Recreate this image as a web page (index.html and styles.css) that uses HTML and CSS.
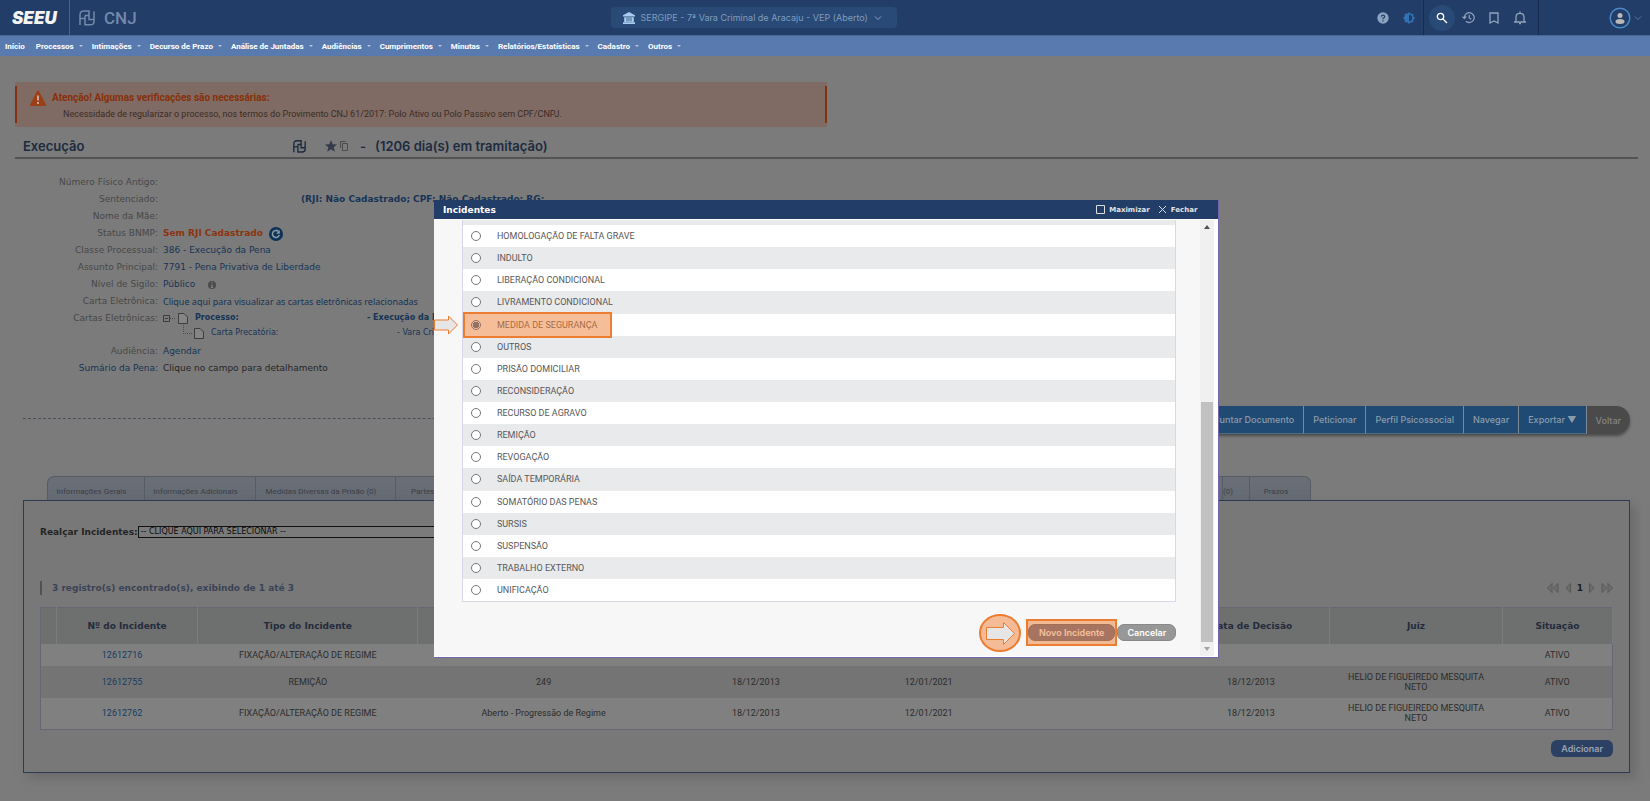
FILE: index.html
```html
<!DOCTYPE html>
<html lang="pt-BR">
<head>
<meta charset="utf-8">
<title>SEEU - Execução</title>
<link rel="stylesheet" href="styles.css">
</head>
<body>
<header class="topbar">
  <a class="brand" href="#">SEEU</a>
  <svg class="pj" viewBox="0 0 16 16" width="16" height="16"><path d="M1 15V5Q1 1 5 1H10V5.500M1 8.500H6M6 5.500V14.800H11.500Q15 14.800 15 11.500V1.500M6 5.500H10V9.500H15"/></svg>
  <span class="cnj">CNJ</span>
  <button class="court" type="button">
    <svg viewBox="0 0 12 12" width="12" height="12"><path fill="#a9cdf0" d="M6 0 12 3.200V4.500H0V3.200ZM1.200 5.200H10.800V10H1.200ZM0 10.300H12V12H0Z"/><path stroke="#294a76" stroke-width=".8" d="M4 5.500V9.500M6 5.500V9.500M8 5.500V9.500"/></svg>
    <span>SERGIPE - 7ª Vara Criminal de Aracaju - VEP (Aberto)</span>
    <svg viewBox="0 0 8 8" width="8" height="8"><path fill="none" stroke="#8aa6c6" d="M1 2.500 4 5.500 7 2.500"/></svg>
  </button>
  <div class="tools">
    <button class="tool" type="button" aria-label="Ajuda"><svg viewBox="0 0 12 12" width="12" height="12"><circle cx="6" cy="6" r="5.700" fill="#8ca3c2"/><path fill="none" stroke="#223d68" stroke-width="1.200" d="M4.300 4.700Q4.400 3.200 6 3.200T7.700 4.700Q7.600 5.600 6 6.300V7.300M6 8.200V9.400"/></svg></button>
    <button class="tool" type="button" aria-label="Contraste"><svg viewBox="0 0 12 12" width="12" height="12"><path fill="#3272b4" d="M6 0 7.700 1.700H10.300V4.300L12 6 10.300 7.700V10.300H7.700L6 12 4.300 10.300H1.700V7.700L0 6 1.700 4.300V1.700H4.300Z"/><path fill="#223d68" d="M6 2.800A3.200 3.200 0 0 1 6 9.200Z"/></svg></button>
  </div>
  <div class="tools tools-main">
    <button class="tool tool-on" type="button" aria-label="Pesquisar"><svg viewBox="0 0 12 12" width="12" height="12" fill="none" stroke="#fff" stroke-width="1.300"><circle cx="4.500" cy="4.500" r="3.200"/><path d="M7 7 11 11"/></svg></button>
    <button class="tool" type="button" aria-label="Histórico"><svg viewBox="0 0 14 14" width="13" height="13" fill="none" stroke="#93a3bb" stroke-width="1.300"><path d="M2.500 7A5.300 5.300 0 1 1 4.200 11M.5 6 2.500 8 4.700 6M7.800 4V7.500L10 9"/></svg></button>
    <button class="tool" type="button" aria-label="Favoritos"><svg viewBox="0 0 12 12" width="12" height="12" fill="none" stroke="#93a3bb" stroke-width="1.300"><path d="M2 1H10V11L6 9 2 11Z"/></svg></button>
    <button class="tool" type="button" aria-label="Notificações"><svg viewBox="0 0 12 14" width="12" height="14" fill="none" stroke="#93a3bb" stroke-width="1.300"><path d="M0 11H12M2 11V6Q2 2.300 6 2.300T10 6V11M6 .5V2M5 12.700H7"/></svg></button>
  </div>
  <button class="user" type="button" aria-label="Usuário">
    <svg viewBox="0 0 22 22" width="22" height="22"><circle cx="11" cy="11" r="9.800" fill="none" stroke="#4d88c6" stroke-width="1.500"/><circle cx="11" cy="8.500" r="2.500" fill="#b9b9b9"/><ellipse cx="11" cy="14.500" rx="4.500" ry="2.500" fill="#b9b9b9"/></svg>
    <svg viewBox="0 0 8 8" width="8" height="8"><path fill="none" stroke="#4f79a3" d="M1 2.500 4 5.500 7 2.500"/></svg>
  </button>
</header>
<nav class="menu">
  <a href="#">Início</a><a class="drop" href="#">Processos</a><a class="drop" href="#">Intimações</a><a class="drop" href="#">Decurso de Prazo</a><a class="drop" href="#">Análise de Juntadas</a><a class="drop" href="#">Audiências</a><a class="drop" href="#">Cumprimentos</a><a class="drop" href="#">Minutas</a><a class="drop" href="#">Relatórios/Estatísticas</a><a class="drop" href="#">Cadastro</a><a class="drop" href="#">Outros</a>
</nav>
<main class="page">
  <section class="alert">
    <svg viewBox="0 0 16 16" width="16" height="16"><path fill="#9c3f16" stroke="#9c3f16" stroke-linejoin="round" stroke-width="2" d="M8 1.500 15 15H1Z"/><path stroke="#c9b0a6" stroke-width="1.800" d="M8 5.500V10.500M8 12V14"/></svg>
    <div><strong>Atenção! Algumas verificações são necessárias:</strong>
    <p>Necessidade de regularizar o processo, nos termos do Provimento CNJ 61/2017: Polo Ativo ou Polo Passivo sem CPF/CNPJ.</p></div>
  </section>
  <div class="heading">
    <h1>Execução</h1>
    <svg class="h-pj" viewBox="0 0 16 16" width="13" height="13"><path d="M1 15V5Q1 1 5 1H10V5.500M1 8.500H6M6 5.500V14.800H11.500Q15 14.800 15 11.500V1.500M6 5.500H10V9.500H15"/></svg>
    <svg class="h-star" viewBox="0 0 12 12" width="12" height="12"><path fill="#343c4b" d="M6 0 7.700 4.200 12 4.500 8.700 7.300 9.800 11.800 6 9.300 2.200 11.800 3.300 7.300 0 4.500 4.300 4.200Z"/></svg>
    <svg class="h-copy" viewBox="0 0 8 10" width="8" height="10"><path fill="none" stroke="#4b4b4b" d="M.5 7V.5H5.500M2.500 2.500H7.500V9.500H2.500Z"/></svg>
    <span class="dash">-</span>
    <span>(1206 dia(s) em tramitação)</span>
  </div>
  <dl class="facts">
    <dt>Número Físico Antigo:</dt><dd></dd>
    <dt>Sentenciado:</dt><dd><b class="rji">(RJI: Não Cadastrado; CPF: Não Cadastrado; RG:</b></dd>
    <dt>Nome da Mãe:</dt><dd></dd>
    <dt>Status BNMP:</dt><dd class="status"><b>Sem RJI Cadastrado</b><svg viewBox="0 0 14 14" width="14" height="14"><circle cx="7" cy="7" r="7" fill="#0c3357"/><path fill="none" stroke="#8b97a3" stroke-width="1.600" d="M9.500 4.500A3.500 3.500 0 1 0 10.300 8"/><path fill="#8b97a3" d="M10.800 3V6.800H7Z"/></svg></dd>
    <dt>Classe Processual:</dt><dd>386 - Execução da Pena</dd>
    <dt>Assunto Principal:</dt><dd>7791 - Pena Privativa de Liberdade</dd>
    <dt>Nível de Sigilo:</dt><dd class="level">Público<svg viewBox="0 0 8 8" width="8" height="8"><circle cx="4" cy="4" r="4" fill="#4c4c4c"/><path stroke="#858585" stroke-width="1.200" d="M4 1.300V2.300M4 3.200V6.500M3 6.500H5"/></svg></dd>
    <dt>Carta Eletrônica:</dt><dd class="letters"><a href="#">Clique aqui para visualizar as cartas eletrônicas relacionadas</a></dd>
    <dt>Cartas Eletrônicas:</dt>
    <dd class="tree">
      <b><svg viewBox="0 0 26 15" width="26" height="15" fill="none"><path stroke="#3c3c3c" d="M.5 5.500H6.500V11.500H.5ZM2 8.500H5"/><path stroke="#4c4c4c" stroke-dasharray="1 1" d="M7 8.500H13"/><path fill="#858585" stroke="#3d3d3d" d="M15.500 3.500H21L24.500 7V13.500H15.500Z"/></svg><span>Processo:</span><span>- Execução da Pena</span></b>
      <p><svg viewBox="0 0 42 15" width="42" height="15" fill="none"><path stroke="#4c4c4c" stroke-dasharray="1 1" d="M20.500 0V8.500H29"/><path fill="#858585" stroke="#3d3d3d" d="M31.500 3.500H37L40.500 7V13.500H31.500Z"/></svg><span>Carta Precatória:</span><span>- Vara Criminal</span></p>
    </dd>
    <dt>Audiência:</dt><dd><a href="#">Agendar</a></dd>
    <dt><a href="#">Sumário da Pena:</a></dt><dd class="plain">Clique no campo para detalhamento</dd>
  </dl>
  <div class="actions">
    <div class="action-group">
      <button type="button">Juntar Documento</button><button type="button">Peticionar</button><button type="button">Perfil Psicossocial</button><button type="button">Navegar</button><button type="button">Exportar ▼</button><button class="back" type="button">Voltar</button>
    </div>
  </div>
  <div class="tabs">
    <button type="button" class="t1">Informações Gerais</button><button type="button" class="t2">Informações Adicionais</button><button type="button" class="t3">Medidas Diversas da Prisão (0)</button><button type="button" class="t4">Partes</button><button type="button" class="t5">(0)</button><button type="button" class="t6">Prazos</button>
  </div>
  <section class="panel">
    <div class="filter"><label for="hl">Realçar Incidentes:</label><select id="hl"><option>-- CLIQUE AQUI PARA SELECIONAR --</option></select></div>
    <div class="count"><strong>3 registro(s) encontrado(s), exibindo de 1 até 3</strong>
      <div class="pager">
        <svg viewBox="0 0 24 10" width="24" height="10"><path d="M5 .5V9.500L.5 5ZM11 .5V9.500L6.500 5ZM23.500 .5V9.500L19 5Z"/></svg>
        <b>1</b>
        <svg viewBox="0 0 24 10" width="24" height="10"><path d="M.5 .5V9.500L5 5ZM13 .5V9.500L17.500 5ZM19 .5V9.500L23.500 5Z"/></svg>
      </div>
    </div>
    <table class="grid">
      <colgroup><col class="c1"><col class="c2"><col class="c3"><col class="c4"><col class="c5"><col class="c5"><col class="c6"><col class="c6"><col class="c5"><col class="c7"></colgroup>
      <thead><tr><th></th><th>Nº do Incidente</th><th>Tipo do Incidente</th><th></th><th></th><th></th><th></th><th>Data de Decisão</th><th>Juiz</th><th>Situação</th></tr></thead>
      <tbody>
        <tr><td></td><td class="num"><a href="#">12612716</a></td><td>FIXAÇÃO/ALTERAÇÃO DE REGIME</td><td></td><td></td><td></td><td></td><td></td><td></td><td>ATIVO</td></tr>
        <tr class="tall"><td></td><td class="num"><a href="#">12612755</a></td><td>REMIÇÃO</td><td>249</td><td>18/12/2013</td><td>12/01/2021</td><td></td><td>18/12/2013</td><td>HELIO DE FIGUEIREDO MESQUITA NETO</td><td>ATIVO</td></tr>
        <tr class="tall"><td></td><td class="num"><a href="#">12612762</a></td><td>FIXAÇÃO/ALTERAÇÃO DE REGIME</td><td>Aberto - Progressão de Regime</td><td>18/12/2013</td><td>12/01/2021</td><td></td><td>18/12/2013</td><td>HELIO DE FIGUEIREDO MESQUITA NETO</td><td>ATIVO</td></tr>
      </tbody>
    </table>
    <div class="add"><button type="button">Adicionar</button></div>
  </section>
</main>
<div class="modal" role="dialog" aria-label="Incidentes">
  <div class="modal-head"><h2>Incidentes</h2>
    <button type="button"><svg viewBox="0 0 9 9" width="9" height="9"><path fill="none" stroke="#ddd" d="M.5 .5H8.500V8.500H.5Z"/></svg>Maximizar</button>
    <button type="button"><svg viewBox="0 0 9 9" width="9" height="9"><path fill="none" stroke="#ddd" d="M1 1 8 8M8 1 1 8"/></svg>Fechar</button>
  </div>
  <div class="modal-body">
    <div class="modal-content">
      <ul class="options">
        <li class="cut"><input type="radio" name="inc" aria-label="Opção anterior"></li>
        <li><label><input type="radio" name="inc">HOMOLOGAÇÃO DE FALTA GRAVE</label></li>
        <li><label><input type="radio" name="inc">INDULTO</label></li>
        <li><label><input type="radio" name="inc">LIBERAÇÃO CONDICIONAL</label></li>
        <li><label><input type="radio" name="inc">LIVRAMENTO CONDICIONAL</label></li>
        <li class="marked"><label><input type="radio" name="inc" checked>MEDIDA DE SEGURANÇA</label><span class="mark"></span>
          <svg class="arrow" viewBox="0 0 25 20" width="25" height="20"><path fill="#e7e6e6" stroke="#ed7d31" d="M.5 5H14.500V1L23.500 10 14.500 19V15H.5Z"/></svg></li>
        <li><label><input type="radio" name="inc">OUTROS</label></li>
        <li><label><input type="radio" name="inc">PRISÃO DOMICILIAR</label></li>
        <li><label><input type="radio" name="inc">RECONSIDERAÇÃO</label></li>
        <li><label><input type="radio" name="inc">RECURSO DE AGRAVO</label></li>
        <li><label><input type="radio" name="inc">REMIÇÃO</label></li>
        <li><label><input type="radio" name="inc">REVOGAÇÃO</label></li>
        <li><label><input type="radio" name="inc">SAÍDA TEMPORÁRIA</label></li>
        <li><label><input type="radio" name="inc">SOMATÓRIO DAS PENAS</label></li>
        <li><label><input type="radio" name="inc">SURSIS</label></li>
        <li><label><input type="radio" name="inc">SUSPENSÃO</label></li>
        <li><label><input type="radio" name="inc">TRABALHO EXTERNO</label></li>
        <li><label><input type="radio" name="inc">UNIFICAÇÃO</label></li>
      </ul>
      <div class="modal-foot">
        <svg viewBox="0 0 42 38" width="42" height="38"><ellipse cx="21" cy="19" rx="20" ry="18" fill="#f4bb96" stroke="#ed7d31" stroke-width="2"/><path fill="#e7e6e6" stroke="#ed7d31" d="M7.500 13.500H24.500V8.500L35.500 19.500 24.500 30.500V25.500H7.500Z"/></svg>
        <div class="new"><button type="button">Novo Incidente</button><span class="mark"></span></div>
        <button type="button" class="cancel">Cancelar</button>
      </div>
    </div>
    <div class="scroll">
      <svg viewBox="0 0 6 4" width="6" height="4"><path fill="#505050" d="M3 0 6 4H0Z"/></svg>
      <i></i>
      <svg viewBox="0 0 6 4" width="6" height="4"><path fill="#a3a3a3" d="M0 0H6L3 4Z"/></svg>
    </div>
  </div>
</div>
</body>
</html>
```
FILE: styles.css
```css
* { box-sizing: border-box; }
body { margin: 0; background: #7b7b7b; font-family: Inter, sans-serif; font-size: 9px; color: #2c2c2c; min-height: 100vh; }
button { font: inherit; border: 0; background: none; padding: 0; color: inherit; }
a { color: inherit; text-decoration: none; }
svg { display: block; flex: none; }
p, h1, h2, ul, dl, dd { margin: 0; padding: 0; }

.topbar { height: 35px; background: #223d68; display: flex; align-items: center; position: relative; }
.brand { align-self: stretch; width: 70px; padding-left: 12px; border-right: 1px solid #4c6288; display: flex; align-items: center; font-size: 17px; font-weight: 900; font-style: italic; color: #f4f4f4; }
.pj { margin-left: 9px; fill: none; stroke: #7389ab; stroke-width: 1.5; }
.cnj { margin-left: 9px; font: 500 17px Roboto, sans-serif; color: #7389ab; }
.court { position: absolute; left: 37%; top: 7px; height: 21px; width: 286px; padding-left: 12px; background: #294a76; border-radius: 4px; display: flex; align-items: center; gap: 6px; color: #7f9cbf; font-size: 9px; }
.tools { margin-left: auto; align-self: stretch; display: flex; align-items: center; padding-right: 1px; }
.tool { width: 26px; height: 26px; border-radius: 50%; display: grid; place-items: center; }
.tool-on { background: #294a76; }
.tools-main { margin-left: 0; padding: 0 5px; border-left: 1px solid #172c4e; border-right: 1px solid #172c4e; }
.user { display: flex; align-items: center; gap: 3px; margin: 0 8px 0 70px; }

.menu { height: 21px; background: #597aaf; border-top: 1px solid #4a6693; display: flex; align-items: center; gap: 9px; padding-left: 5px; font: bold 8px Roboto, sans-serif; color: #fff; }
.menu a:first-child { margin-right: 2px; }
.drop { display: flex; align-items: center; gap: 5px; }
.drop::after { content: ""; border: 2px solid transparent; border-top-color: #b9c8e0; border-bottom: 0; }

.page { padding: 26px 12px 0 15px; }
.alert { position: relative; width: 50%; height: 45px; background: #7f6b63; padding: 8px 0 0 15px; display: flex; gap: 6px; color: #3c2c26; font-family: Roboto, sans-serif; }
.alert::after { content: ""; position: absolute; inset: 4px 0; border: solid #84300c; border-width: 0 2px; }
.alert strong { font-size: 10px; line-height: 16px; color: #88300a; display: block; }
.alert p { padding-left: 11px; line-height: 16px; }
.heading { display: flex; align-items: center; height: 32px; padding: 8px 0 0 8px; border-bottom: 2px solid #535353; font-size: 13px; font-weight: 600; color: #1d2b40; }
.heading h1 { font-size: 13px; font-weight: 600; width: 270px; }
.h-pj { fill: none; stroke: #1d2b40; stroke-width: 1.7; }
.h-star { margin-left: 19px; }
.h-copy { margin-left: 3px; }
.dash { margin: 0 9px 0 12px; }

.facts { display: grid; grid-template-columns: 143px 1fr; grid-auto-rows: minmax(17px, auto); column-gap: 5px; padding-top: 15px; font: 9px/17px "DejaVu Sans", sans-serif; color: #163456; align-content: start; height: 247px; }
.facts dt { text-align: right; color: #484848; white-space: nowrap; }
.facts dt a { color: #163456; }
.facts dd { white-space: nowrap; }
.rji { padding-left: 138px; }
.status { display: flex; align-items: center; gap: 6px; color: #8c3410; }
.level { display: flex; align-items: center; gap: 13px; }
.facts .plain { color: #262626; }
.facts .letters { font-family: "Noto Sans", sans-serif; }
.tree { height: 33px; font-size: 8px; line-height: 15px; }
.tree b, .tree p { display: flex; gap: 6px; }
.tree b span { width: 166px; }
.tree p span { width: 180px; }

.actions { margin: 0 8px; position: relative; display: flex; align-items: center; height: 28px; }
.actions::before { content: ""; flex: 1; border-top: 1px dashed #4a4f5c; margin-bottom: 4px; }
.action-group { display: flex; border-radius: 0 14px 14px 0; box-shadow: 0 2px 3px #4b4b4b; overflow: hidden; }
.action-group button { height: 28px; padding: 0 9px; background: #1f4a73; border-right: 1px solid #7d8894; border-bottom: 1px solid #4f6982; color: #8d9cab; font-size: 9px; font-weight: 500; }
.action-group .back { background: #4a4a4a; color: #858585; border: 0; padding: 0 9px; }

.tabs { margin: 42px 0 0 32px; display: flex; height: 24px; width: 1264px; border: 1px solid #555c66; border-bottom: 0; border-radius: 7px 7px 0 0; background: linear-gradient(#6b7078, #646a73); overflow: hidden; }
.tabs button { padding: 6px 9px 0 0; border-right: 1px solid #555c66; font: 8px Roboto, sans-serif; color: #3c3f44; text-align: center; }
.t1 { width: 97px; }
.t2 { width: 111px; }
.t3 { width: 140px; }
.tabs .t4 { flex: 1; text-align: left; padding-left: 15px; }
.tabs .t5 { text-align: right; padding-right: 16px; }
.tabs .t6 { width: 60px; border: 0; padding-right: 8px; }

.panel { margin: 0 8px; border: 1px solid #2b3c54; background: #787878; padding: 25px 16px 15px; box-shadow: 5px 5px 10px #6a6a6a; }
.filter { display: flex; align-items: center; font: bold 9px/12px "DejaVu Sans", sans-serif; color: #242424; }
.filter select { appearance: none; width: 400px; height: 12px; padding: 0 2px; border: 1px solid #111; border-radius: 0; background: #7b7b7b; font: 8px/10px "DejaVu Sans", sans-serif; color: #0c0c0c; }
.count { display: flex; align-items: center; justify-content: space-between; margin: 43px 0 12px; font-family: "DejaVu Sans", sans-serif; }
.count strong { border-left: 2px solid #525252; padding-left: 10px; font-size: 9px; line-height: 14px; color: #3b4356; }
.pager { display: flex; align-items: center; gap: 6px; font-size: 9px; color: #1c1c1c; }
.pager path { fill: #6d6d6d; stroke: #585858; }

.grid { width: 100%; table-layout: fixed; border-collapse: collapse; border: 1px solid #666675; background: #808080; font: 9px/10px Roboto, sans-serif; text-align: center; }
.grid th { height: 36px; padding: 0; background: #6d706f; border-right: 1px solid #7b7d7c; font: bold 9px/10px "DejaVu Sans", sans-serif; color: #242b3d; }
.grid td { height: 22px; padding: 0 17px; }
.grid .num { padding: 0 22px 0 12px; }
.grid .tall td { height: 32px; }
.grid .tall:nth-child(2) { background: #747474; }
.grid a { color: #143c64; }
.c1 { width: 15px; }
.c2 { width: 9%; }
.c3 { width: 14%; }
.c4 { width: 16%; }
.c5 { width: 11%; }
.c6 { width: 10%; }
.c7 { width: 7%; }
.add { display: flex; justify-content: flex-end; margin-top: 10px; }
.add button { height: 17px; padding: 0 10px; border-radius: 6px; background: #2b4063; color: #9aa3b2; font-size: 9px; font-weight: 600; }

.modal { position: absolute; left: 26.3%; right: 26.1%; top: 200px; height: 458px; background: #fff; border: solid #7664a8; border-width: 0 1px 1px 0; display: flex; flex-direction: column; }
.modal-head { height: 19px; flex: none; background: #223d68; color: #fff; display: flex; align-items: center; gap: 8px; padding: 0 21px 0 9px; }
.modal-head h2 { margin-right: auto; font: bold 9px "DejaVu Sans", sans-serif; }
.modal-head button { display: flex; align-items: center; gap: 4px; font: bold 7px "DejaVu Sans", sans-serif; color: #e4e4e4; }
.modal-body { flex: 1; display: flex; margin: 1px 4px 1px 0; min-height: 0; }
.modal-content { flex: 1; display: flex; flex-direction: column; background: #f7f7f7; padding: 0 24px 3px 28px; }
.options { list-style: none; flex: 1; display: flex; flex-direction: column; border: 1px solid #d8d6ea; border-top: 0; background: #fff; font: 9px Roboto, sans-serif; color: #585858; }
.options li { flex: 1; position: relative; display: flex; align-items: center; }
.options li:nth-child(odd) { background: #e9eaec; }
.options .cut { flex: none; height: 5px; overflow: hidden; align-items: flex-end; padding: 0 0 5px 8px; }
.options .marked { z-index: 1; }
.options label { display: flex; align-items: center; gap: 16px; padding-left: 8px; }
.options input { appearance: none; width: 10px; height: 10px; margin: 0; border: 1px solid #767676; border-radius: 50%; background: #fff; flex: none; }
.options input:checked { border-color: #35629a; background: radial-gradient(#35629a 3px, #fff 3px); }
.mark { position: absolute; border: 2px solid #ed7d31; background: rgba(237, 125, 49, .5); }
.marked .mark { left: 0; top: -2px; width: 149px; bottom: -2px; }
.arrow { position: absolute; left: -29px; }
.modal-foot { display: flex; align-items: center; justify-content: flex-end; gap: 2px; height: 51px; padding-top: 10px; }
.modal-foot button { height: 17px; padding: 0 10px; border-radius: 7px; background: #979797; border: 1px solid #898989; color: #fff; font-size: 9px; font-weight: 600; }
.modal-foot .cancel { padding: 0 9px; }
.new { position: relative; margin-left: 5px; }
.modal-foot .new button { background: #5f6a90; border-color: #566070; }
.new .mark { inset: -5px -2px; }
.scroll { width: 14px; background: #f0f0f0; display: flex; flex-direction: column; align-items: center; padding: 5px 0; }
.scroll i { width: 12px; height: 240px; margin: auto 0 5px; background: #c1c1c1; }
```
